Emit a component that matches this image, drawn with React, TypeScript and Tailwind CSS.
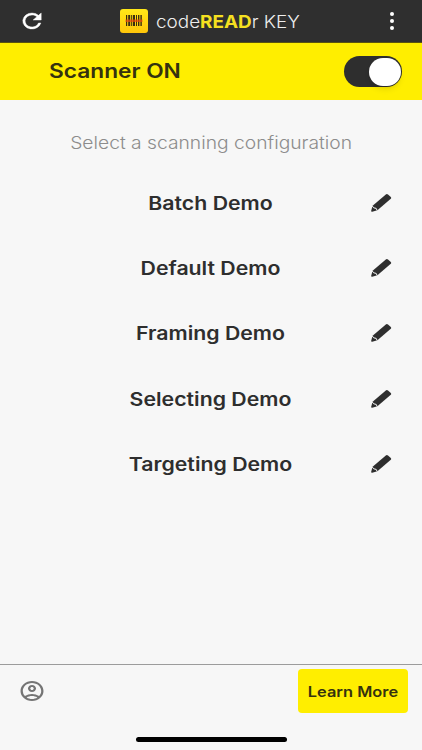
import { MdOutlineAccountCircle } from 'react-icons/md';

const configurations = [
  'Batch Demo',
  'Default Demo',
  'Framing Demo',
  'Selecting Demo',
  'Targeting Demo',
];

function RefreshIcon() {
  return (
    <svg viewBox="0 0 24 24" className="w-6 h-6 scale-x-115" fill="#fff" stroke="#fff" strokeWidth="0.4">
      <path d="M17.65 6.35A7.96 7.96 0 0 0 12 4a8 8 0 1 0 7.73 10h-2.08A6 6 0 1 1 12 6c1.66 0 3.14.69 4.22 1.78L13 11h7V4z" />
    </svg>
  );
}

function LogoIcon() {
  return (
    <svg viewBox="0 0 28 24" className="w-7 h-6 shrink-0">
      <defs>
        <linearGradient id="logo" x1="0" y1="0" x2="0" y2="1">
          <stop offset="0" stopColor="#ffe818" />
          <stop offset="1" stopColor="#ffc60a" />
        </linearGradient>
      </defs>
      <rect width="28" height="24" rx="3" fill="url(#logo)" />
      <g fill="#3a2c10">
        <rect x="6" y="6" width="1.2" height="11" />
        <rect x="8.2" y="6" width="2" height="11" />
        <rect x="11.2" y="6" width="1" height="11" />
        <rect x="13" y="6" width="2" height="11" />
        <rect x="16" y="6" width="1" height="11" />
        <rect x="18" y="6" width="1.4" height="11" />
        <rect x="20.4" y="6" width="1.4" height="11" />
      </g>
      <rect x="5.5" y="10.5" width="17" height="2.5" fill="#f04a10" opacity="0.7" />
    </svg>
  );
}

function PencilIcon() {
  return (
    <svg viewBox="0 0 22 20" className="w-[22px] h-5">
      <path
        fill="#2e2e2e"
        d="M15.8 1.4q1.1-.8 2.2 0l2.8 2.5q.9.9 0 1.8L7.4 17.2l-5.2 1.5q-1.2.2-1-.9l1.4-5z"
      />
      <path fill="none" stroke="#f7f7f7" strokeWidth="1" d="M2.2 12.9l1.5 1.9 2.5.6 1 2.2" />
    </svg>
  );
}

export default function App() {
  return (
    <div className="flex flex-col w-full h-[750px] bg-[#f7f7f7] text-[#2e2e2e] font-['Inter',sans-serif] overflow-hidden">
      {/* Title bar */}
      <header className="flex items-center h-[43px] pl-5 pr-7 bg-[#2f2f2f] text-white border-b border-[#5a530f]">
        <RefreshIcon />
        <div className="flex items-center gap-2 ml-[76px]">
          <LogoIcon />
          <h1 className="text-[17.5px] leading-6 pt-px font-light text-[#eeeeee] whitespace-nowrap origin-left scale-x-[1.08]">
            code<span className="font-bold text-[#f5e020]">READ</span>r KEY
          </h1>
        </div>
        <div className="flex flex-col gap-[3px] items-center ml-auto">
          <span className="w-1 h-1 rounded-full bg-white" />
          <span className="w-1 h-1 rounded-full bg-white" />
          <span className="w-1 h-1 rounded-full bg-white" />
        </div>
      </header>

      {/* Scanner switch */}
      <section className="flex items-center justify-between h-[57px] pl-[49px] pr-5 bg-[#ffee00]">
        <h2 className="pb-0.5 text-[20px] font-semibold text-[#35320f] whitespace-nowrap origin-left scale-x-[1.135]">
          Scanner ON
        </h2>
        <button className="flex justify-end items-center w-[58px] h-[31px] p-[1.5px] rounded-full bg-[#2e2e2e]">
          <span className="w-8 h-7 rounded-full bg-white shadow-md" />
        </button>
      </section>

      {/* Configurations */}
      <main className="flex-1">
        <p className="pt-[29px] h-[70px] text-center text-[17.5px] leading-7 font-light text-[#8c8c8c]">
          <span className="inline-block whitespace-nowrap scale-x-110">Select a scanning configuration</span>
        </p>
        <ul>
          {configurations.map((name) => (
            <li key={name} className="grid grid-cols-[1fr_22px] items-center h-[65.4px] pl-[51px] pr-[30px]">
              <span className="pt-[1.5px] text-center text-[18.5px] font-semibold whitespace-nowrap scale-x-115">{name}</span>
              <PencilIcon />
            </li>
          ))}
        </ul>
      </main>

      {/* Footer */}
      <footer className="flex flex-col h-[86px] border-t border-[#9c9c9c]">
        <div className="flex items-center justify-between h-[52px] pl-5 pr-3.5">
          <MdOutlineAccountCircle className="w-6 h-6 scale-x-115 text-[#757575]" />
          <button className="flex items-center justify-center w-[110px] h-11 rounded-[4px] bg-[#ffee00] text-[14.5px] font-semibold text-[#35320f]">
            <span className="pt-px whitespace-nowrap scale-x-[1.13]">Learn More</span>
          </button>
        </div>
        <div className="w-[151px] h-[5px] mt-5 mx-auto rounded-full bg-black" />
      </footer>
    </div>
  );
}
